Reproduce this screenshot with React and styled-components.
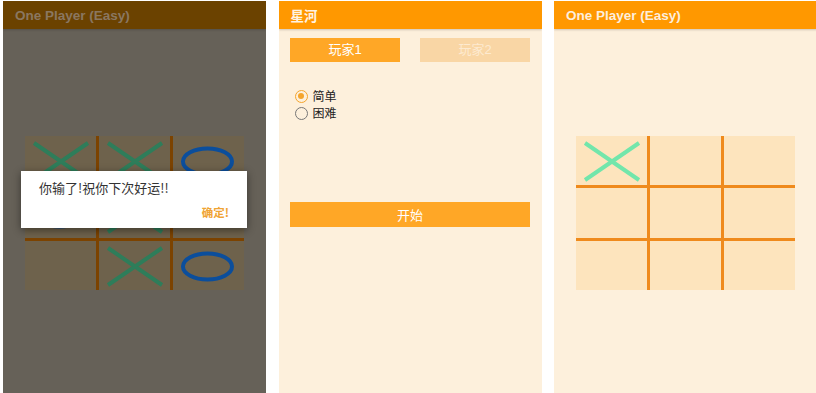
import React from 'react';
import styled, { createGlobalStyle } from 'styled-components';

const Global = createGlobalStyle`
  html, body { margin: 0; padding: 0; background: #ffffff; }
  body { font-family: "Liberation Sans", "Noto Sans CJK SC", sans-serif; }
  * { box-sizing: border-box; }
`;

const Strip = styled.div`
  display: flex;
  gap: 12.5px;
  padding: 1px 0 0 3px;
  width: 816px;
  height: 393px;
  overflow: hidden;
`;

const Phone = styled.div`
  position: relative;
  flex: 0 0 263px;
  height: 392px;
  background: ${(p) => p.$bg};
  display: flex;
  flex-direction: column;
  overflow: hidden;
`;

const AppBar = styled.header`
  flex: none;
  height: 28px;
  display: flex;
  align-items: center;
  padding-left: 12px;
  background: ${(p) => p.$bg};
  color: ${(p) => p.$fg};
  font-family: "Liberation Sans", "Noto Sans CJK SC", sans-serif;
  font-size: 13.5px;
  font-weight: 700;
  box-shadow: 0 1px 2px rgba(0, 0, 0, 0.18);
`;

const BoardGrid = styled.div`
  margin: 107px auto 0;
  width: 219px;
  height: 154px;
  display: grid;
  grid-template-columns: repeat(3, 1fr);
  grid-template-rows: repeat(3, 1fr);
  gap: 3px;
  background: ${(p) => p.$line};
`;

const Cell = styled.div`
  background: ${(p) => p.$bg};
  display: flex;
  align-items: center;
  justify-content: center;
  overflow: hidden;
`;

const Mark = styled.svg`
  width: 71px;
  height: 49px;
  display: block;
`;

function Board({ marks, palette }) {
  return (
    <BoardGrid $line={palette.line}>
      {marks.map((m, i) => (
        <Cell key={i} $bg={palette.cell}>
          {m === 'X' && (
            <Mark viewBox="0 0 71 49">
              <line x1="9" y1="7" x2="63" y2="44" stroke={palette.x} strokeWidth="4" />
              <line x1="63" y1="7" x2="9" y2="44" stroke={palette.x} strokeWidth="4" />
            </Mark>
          )}
          {m === 'O' && (
            <Mark viewBox="0 0 71 49">
              <ellipse cx="34.5" cy="25.5" rx="24.5" ry="13" fill="none" stroke={palette.o} strokeWidth="4" />
            </Mark>
          )}
        </Cell>
      ))}
    </BoardGrid>
  );
}

const Dialog = styled.div`
  position: absolute;
  left: 18px;
  top: 170px;
  width: 226px;
  height: 57px;
  background: #ffffff;
  box-shadow: 0 2px 8px rgba(0, 0, 0, 0.45);
  padding: 9px 18px 0 18px;
  display: flex;
  flex-direction: column;
`;

const DialogText = styled.div`
  font-family: "Noto Sans CJK SC", sans-serif;
  font-size: 13px;
  line-height: 16px;
  color: #333333;
`;

const DialogAction = styled.div`
  margin-top: 8px;
  align-self: flex-end;
  font-family: "Noto Sans CJK SC", sans-serif;
  font-size: 11.5px;
  line-height: 16px;
  font-weight: 700;
  color: #f0a434;
`;

const Tabs = styled.div`
  display: flex;
  gap: 20px;
  padding: 9px 11.5px 0;
`;

const Tab = styled.button`
  flex: 1;
  height: 24px;
  border: 0;
  padding: 0;
  background: ${(p) => (p.$active ? '#ffa726' : '#f9d6a5')};
  color: ${(p) => (p.$active ? '#ffffff' : '#fdead0')};
  font-family: "Liberation Sans", "Noto Sans CJK SC", sans-serif;
  font-size: 13px;
  line-height: 16px;
`;

const RadioGroup = styled.div`
  margin: 26px 0 0 16px;
  display: flex;
  flex-direction: column;
  gap: 1px;
`;

const RadioRow = styled.label`
  display: flex;
  align-items: center;
  gap: 5px;
  height: 16px;
  font-family: "Noto Sans CJK SC", sans-serif;
  font-size: 12px;
  line-height: 16px;
  color: #222222;
`;

const RadioDot = styled.span`
  flex: none;
  width: 13px;
  height: 13px;
  border-radius: 50%;
  border: 1.5px solid ${(p) => (p.$on ? '#f5a52c' : '#777777')};
  display: flex;
  align-items: center;
  justify-content: center;
  &::after {
    content: '';
    width: 6px;
    height: 6px;
    border-radius: 50%;
    background: ${(p) => (p.$on ? '#f5a52c' : 'transparent')};
  }
`;

const StartButton = styled.button`
  margin: 81px 11.5px 0;
  height: 25px;
  border: 0;
  background: #ffa726;
  color: #ffffff;
  font-family: "Noto Sans CJK SC", sans-serif;
  font-size: 13px;
  line-height: 16px;
`;

const dimPalette = { line: '#7c4300', cell: '#6e624c', x: '#2e7d5a', o: '#0b4e9c' };
const livePalette = { line: '#ef8a1c', cell: '#fde4bd', x: '#72e6ab', o: '#1565c0' };

export default function App() {
  return (
    <>
      <Global />
      <Strip>
        <Phone $bg="#666158">
          <AppBar $bg="#6b4200" $fg="#8a7760">One Player (Easy)</AppBar>
          <Board palette={dimPalette} marks={['X', 'X', 'O', 'O', 'X', '', '', 'X', 'O']} />
          <Dialog>
            <DialogText>你输了!祝你下次好运!!</DialogText>
            <DialogAction>确定!</DialogAction>
          </Dialog>
        </Phone>

        <Phone $bg="#fdf0dc">
          <AppBar $bg="#ff9800" $fg="#fff3e2">星河</AppBar>
          <Tabs>
            <Tab $active>玩家1</Tab>
            <Tab>玩家2</Tab>
          </Tabs>
          <RadioGroup>
            <RadioRow><RadioDot $on />简单</RadioRow>
            <RadioRow><RadioDot />困难</RadioRow>
          </RadioGroup>
          <StartButton>开始</StartButton>
        </Phone>

        <Phone $bg="#fdf0dc">
          <AppBar $bg="#ff9800" $fg="#fdeedd">One Player (Easy)</AppBar>
          <Board palette={livePalette} marks={['X', '', '', '', '', '', '', '', '']} />
        </Phone>
      </Strip>
    </>
  );
}
